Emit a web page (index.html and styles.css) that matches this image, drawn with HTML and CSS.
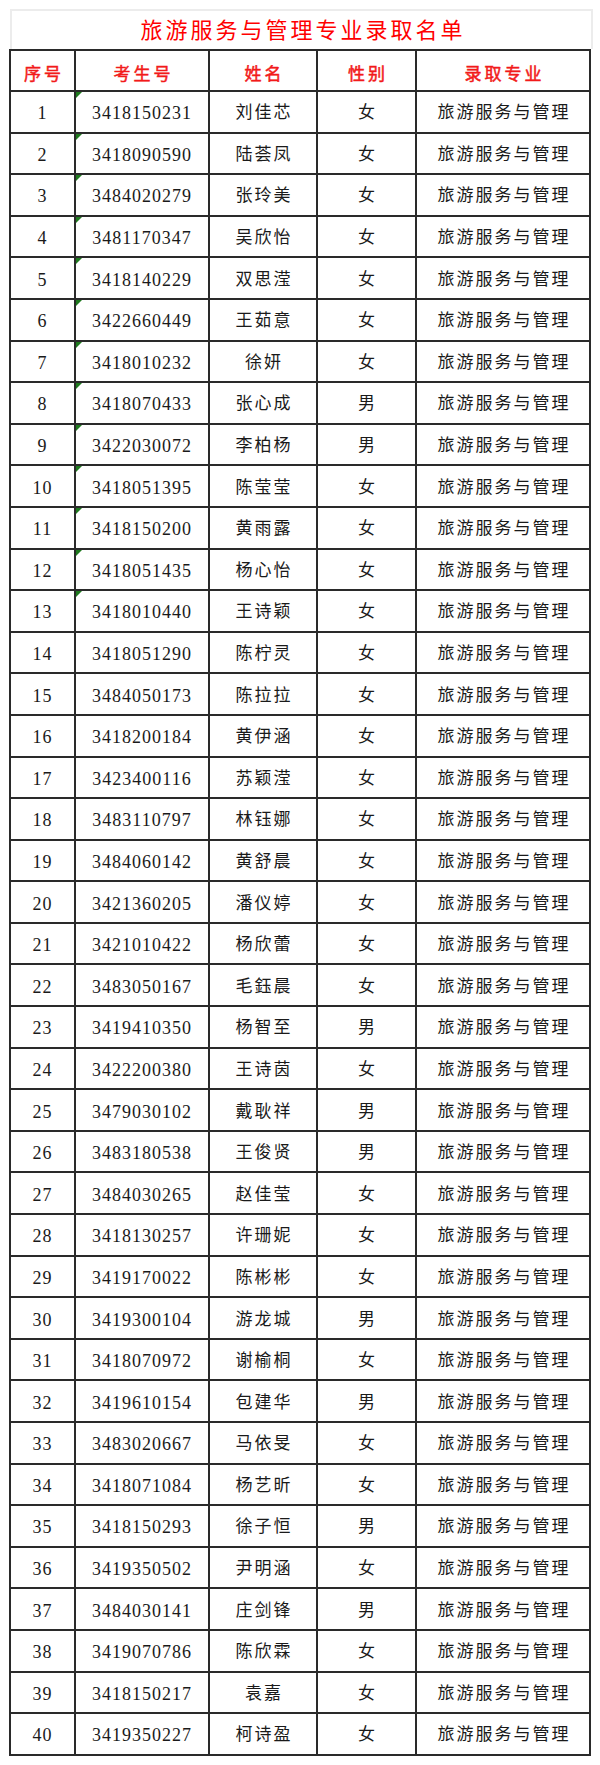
FILE: index.html
```html
<!DOCTYPE html>
<html lang="zh-CN">
<head>
<meta charset="utf-8">
<title>旅游服务与管理专业录取名单</title>
<link rel="stylesheet" href="styles.css">
</head>
<body>
<div class="sheet">
  <div class="title">旅游服务与管理专业录取名单</div>
  <table class="list">
    <colgroup>
      <col class="c-no"><col class="c-id"><col class="c-name"><col class="c-sex"><col class="c-major">
    </colgroup>
    <thead>
      <tr><th>序号</th><th>考生号</th><th>姓名</th><th class="thin">性别</th><th>录取专业</th></tr>
    </thead>
    <tbody id="rows"></tbody>
  </table>
</div>
<script>
var data = [
["3418150231","刘佳芯","女"],["3418090590","陆荟凤","女"],["3484020279","张玲美","女"],["3481170347","吴欣怡","女"],
["3418140229","双思滢","女"],["3422660449","王茹意","女"],["3418010232","徐妍","女"],["3418070433","张心成","男"],
["3422030072","李柏杨","男"],["3418051395","陈莹莹","女"],["3418150200","黄雨露","女"],["3418051435","杨心怡","女"],
["3418010440","王诗颖","女"],["3418051290","陈柠灵","女"],["3484050173","陈拉拉","女"],["3418200184","黄伊涵","女"],
["3423400116","苏颖滢","女"],["3483110797","林钰娜","女"],["3484060142","黄舒晨","女"],["3421360205","潘仪婷","女"],
["3421010422","杨欣蕾","女"],["3483050167","毛鈺晨","女"],["3419410350","杨智至","男"],["3422200380","王诗茵","女"],
["3479030102","戴耿祥","男"],["3483180538","王俊贤","男"],["3484030265","赵佳莹","女"],["3418130257","许珊妮","女"],
["3419170022","陈彬彬","女"],["3419300104","游龙城","男"],["3418070972","谢榆桐","女"],["3419610154","包建华","男"],
["3483020667","马依旻","女"],["3418071084","杨艺昕","女"],["3418150293","徐子恒","男"],["3419350502","尹明涵","女"],
["3484030141","庄剑锋","男"],["3419070786","陈欣霖","女"],["3418150217","袁嘉","女"],["3419350227","柯诗盈","女"]
];
var tb = document.getElementById("rows");
var html = "";
for (var i = 0; i < data.length; i++) {
  var d = data[i];
  html += "<tr><td class=\"num\">" + (i + 1) + "</td><td class=\"num id\">" +
    (i < 13 ? "<span class=\"mark\"></span>" : "") + d[0] +
    "</td><td class=\"cjk\">" + d[1] + "</td><td class=\"cjk thin\">" + d[2] +
    "</td><td class=\"cjk\">旅游服务与管理</td></tr>";
}
tb.innerHTML = html;
</script>
</body>
</html>
```

FILE: styles.css
```css
html, body {
  margin: 0;
  padding: 0;
  background: #ffffff;
}

.sheet {
  padding: 9px 9px 0 9px;
  width: 582px;
  font-family: "Liberation Serif", "Noto Sans CJK SC", serif;
  color: #1a1a1a;
}

.title {
  margin-left: 1px;
  width: 576px;
  height: 38px;
  border: 2px solid #ececec;
  border-bottom: none;
  text-align: center;
  color: #ff0000;
  font-size: 22px;
  letter-spacing: 3px;
  line-height: 40px;
  padding-left: 3px;
}

.list {
  border-collapse: collapse;
  table-layout: fixed;
  width: 582px;
  border: 2px solid #2a2a2a;
}

.c-no { width: 65px; }
.c-id { width: 134px; }
.c-name { width: 108px; }
.c-sex { width: 99px; }
.c-major { width: 174px; }

.list th,
.list td {
  border: 2px solid #2a2a2a;
  text-align: center;
  vertical-align: middle;
  padding: 3px 0 0 0;
  position: relative;
}

.list th {
  height: 36px;
  color: #f21a1a;
  font-size: 17px;
  font-weight: 400;
  -webkit-text-stroke: 0.5px #f21a1a;
  letter-spacing: 3px;
  padding-left: 3px;
}

.list td {
  height: 36.6px;
  line-height: 20px;
}

.list td.num {
  font-size: 18px;
  letter-spacing: 1px;
}

.list td.cjk {
  font-size: 17px;
  letter-spacing: 2px;
  padding-left: 2px;
}

.list .thin {
  border-right: 1px solid #a8a8a8;
}

.mark {
  position: absolute;
  left: 0;
  top: 0;
  width: 0;
  height: 0;
  border-top: 6px solid #1f7a1f;
  border-right: 6px solid transparent;
}
```
